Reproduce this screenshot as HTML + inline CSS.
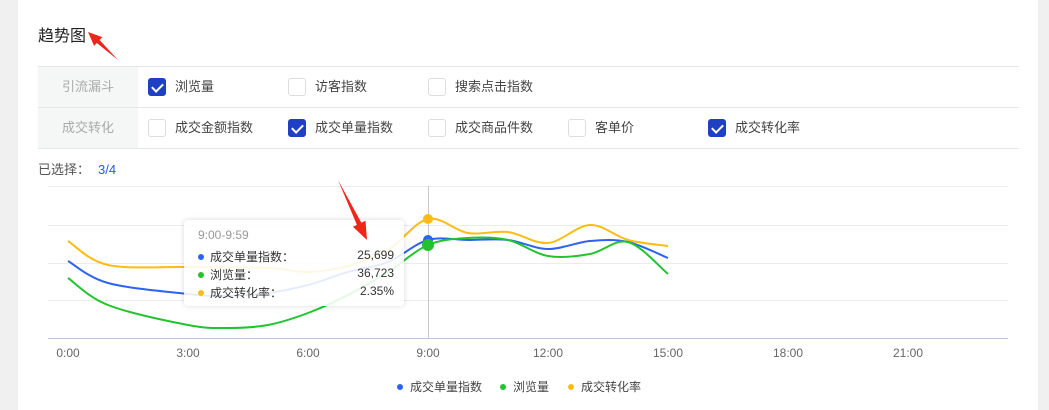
<!DOCTYPE html>
<html><head><meta charset="utf-8"><style>
*{margin:0;padding:0;box-sizing:border-box}
body{width:1049px;height:410px;background:#f0f0f0;font-family:"Liberation Sans","Noto Sans CJK SC",sans-serif;position:relative;overflow:hidden}
.card{position:absolute;left:18px;top:0;width:1020px;height:410px;background:#fff}
.title{position:absolute;left:38px;top:22px;font-size:16px;color:#222}
.tbl{position:absolute;left:38px;top:66px;width:981px;border-top:1px solid #e6e6e6}
.row{height:41px;border-bottom:1px solid #e6e6e6;position:relative}
.hd{position:absolute;left:0;top:0;width:100px;height:40px;background:#f5f6f6;color:#aaa;font-size:13px;line-height:40px;text-align:center}
.cb{position:absolute;top:11px;width:18px;height:18px;border:1px solid #ddd;border-radius:3px;background:#fff}
.cb.on{background:#1f3fc5;border-color:#1f3fc5}
.cb.on:after{content:"";position:absolute;left:5px;top:2px;width:5px;height:9px;border:solid #fff;border-width:0 2px 2px 0;transform:rotate(45deg)}
.lb{position:absolute;top:0;line-height:40px;font-size:13px;color:#444}
.sel{position:absolute;left:38px;top:159px;font-size:13px;color:#555}
.sel b{font-weight:normal;color:#2a5bd7;margin-left:8px}
.ax{position:absolute;top:346px;font-size:12px;color:#666;width:60px;text-align:center}
.tip{position:absolute;left:184px;top:220px;width:220px;height:86px;background:rgba(255,255,255,0.88);border-radius:4px;box-shadow:0 0 6px rgba(0,0,0,0.15);font-size:12px;color:#333}
.tip .t{position:absolute;left:14px;top:8px;color:#999}
.tip .r{position:absolute;left:14px;width:196px}
.tip .r i{display:inline-block;width:6px;height:6px;border-radius:50%;margin-right:6px;vertical-align:middle;position:relative;top:-1px}
.tip .r span{position:absolute;right:0}
.lg{position:absolute;top:378px;font-size:12px;color:#444}
.lg i{display:inline-block;width:6px;height:6px;border-radius:50%;margin-right:7px;vertical-align:middle;position:relative;top:-1px}
</style></head><body>
<div class="card"></div>
<div class="title">趋势图</div>
<div class="tbl">
<div class="row"><div class="hd">引流漏斗</div>
<div class="cb on" style="left:110px"></div><div class="lb" style="left:137px">浏览量</div>
<div class="cb" style="left:250px"></div><div class="lb" style="left:277px">访客指数</div>
<div class="cb" style="left:390px"></div><div class="lb" style="left:417px">搜索点击指数</div></div>
<div class="row"><div class="hd">成交转化</div>
<div class="cb" style="left:110px"></div><div class="lb" style="left:137px">成交金额指数</div>
<div class="cb on" style="left:250px"></div><div class="lb" style="left:277px">成交单量指数</div>
<div class="cb" style="left:390px"></div><div class="lb" style="left:417px">成交商品件数</div>
<div class="cb" style="left:530px"></div><div class="lb" style="left:557px">客单价</div>
<div class="cb on" style="left:670px"></div><div class="lb" style="left:697px">成交转化率</div></div>
</div>
<div class="sel">已选择：<b>3/4</b></div>
<svg id="ch" style="position:absolute;left:0;top:0" width="1049" height="410">
<g stroke="#ececec" stroke-width="1">
<line x1="48" y1="186.5" x2="1008" y2="186.5"/><line x1="48" y1="225.5" x2="1008" y2="225.5"/>
<line x1="48" y1="263.5" x2="1008" y2="263.5"/><line x1="48" y1="300.5" x2="1008" y2="300.5"/></g>
<line x1="48" y1="338.5" x2="1008" y2="338.5" stroke="#b8c8e0"/>
<line x1="428.5" y1="186" x2="428.5" y2="338" stroke="#c8c8c8"/>
<path id="py" fill="none" stroke="#fbbd14" stroke-width="2"/>
<path id="pb" fill="none" stroke="#2c63f0" stroke-width="2"/>
<path id="pg" fill="none" stroke="#21c42f" stroke-width="2"/>
<circle cx="428" cy="219" r="5" fill="#fbbd14"/>
<circle cx="428" cy="240" r="5" fill="#2c63f0"/>
<circle cx="428" cy="245" r="6" fill="#21c42f"/>
</svg>
<div class="ax" style="left:38px">0:00</div><div class="ax" style="left:158px">3:00</div>
<div class="ax" style="left:278px">6:00</div><div class="ax" style="left:398px">9:00</div>
<div class="ax" style="left:518px">12:00</div><div class="ax" style="left:638px">15:00</div>
<div class="ax" style="left:758px">18:00</div><div class="ax" style="left:878px">21:00</div>
<div class="tip"><div class="t">9:00-9:59</div>
<div class="r" style="top:28px"><i style="background:#2c63f0"></i>成交单量指数：<span>25,699</span></div>
<div class="r" style="top:46px"><i style="background:#21c42f"></i>浏览量：<span>36,723</span></div>
<div class="r" style="top:64px"><i style="background:#fbbd14"></i>成交转化率：<span>2.35%</span></div></div>
<svg style="position:absolute;left:0;top:0" width="1049" height="410">
<polygon points="118,60 96.8,43 94.1,45.9 88,32 102.3,37.1 99.6,40" fill="#f0261a"/>
<polygon points="338,180 356.9,224.9 352.9,226.8 367,240 365.5,220.7 361.4,222.7" fill="#f0261a"/>
</svg>
<div class="lg" style="left:397px"><i style="background:#2c63f0"></i>成交单量指数</div>
<div class="lg" style="left:500px"><i style="background:#21c42f"></i>浏览量</div>
<div class="lg" style="left:568px"><i style="background:#fbbd14"></i>成交转化率</div>
<script>
function cr(p){var d="M"+p[0][0]+","+p[0][1];for(var i=0;i<p.length-1;i++){var a=p[i-1]||p[i],b=p[i],c=p[i+1],e=p[i+2]||c;d+=" C"+(b[0]+(c[0]-a[0])/6)+","+(b[1]+(c[1]-a[1])/6)+" "+(c[0]-(e[0]-b[0])/6)+","+(c[1]-(e[1]-b[1])/6)+" "+c[0]+","+c[1];}return d;}
document.getElementById("py").setAttribute("d",cr([[68,241],[108,265],[188,267],[268,268],[308,272],[348,266],[388,250],[428,219],[468,233],[508,232],[548,243],[590,225],[628,240],[668,246]]));
document.getElementById("pb").setAttribute("d",cr([[68,261],[108,283],[188,294],[228,296],[268,293],[308,285],[348,272],[388,262],[428,240],[468,240],[508,240],[548,249],[590,241],[628,242],[668,258]]));
document.getElementById("pg").setAttribute("d",cr([[68,278],[108,305],[188,325],[228,328],[268,325],[308,313],[348,295],[388,272],[428,245],[468,238],[508,240],[548,256],[590,254],[628,242],[668,274]]));
</script>
</body></html>
